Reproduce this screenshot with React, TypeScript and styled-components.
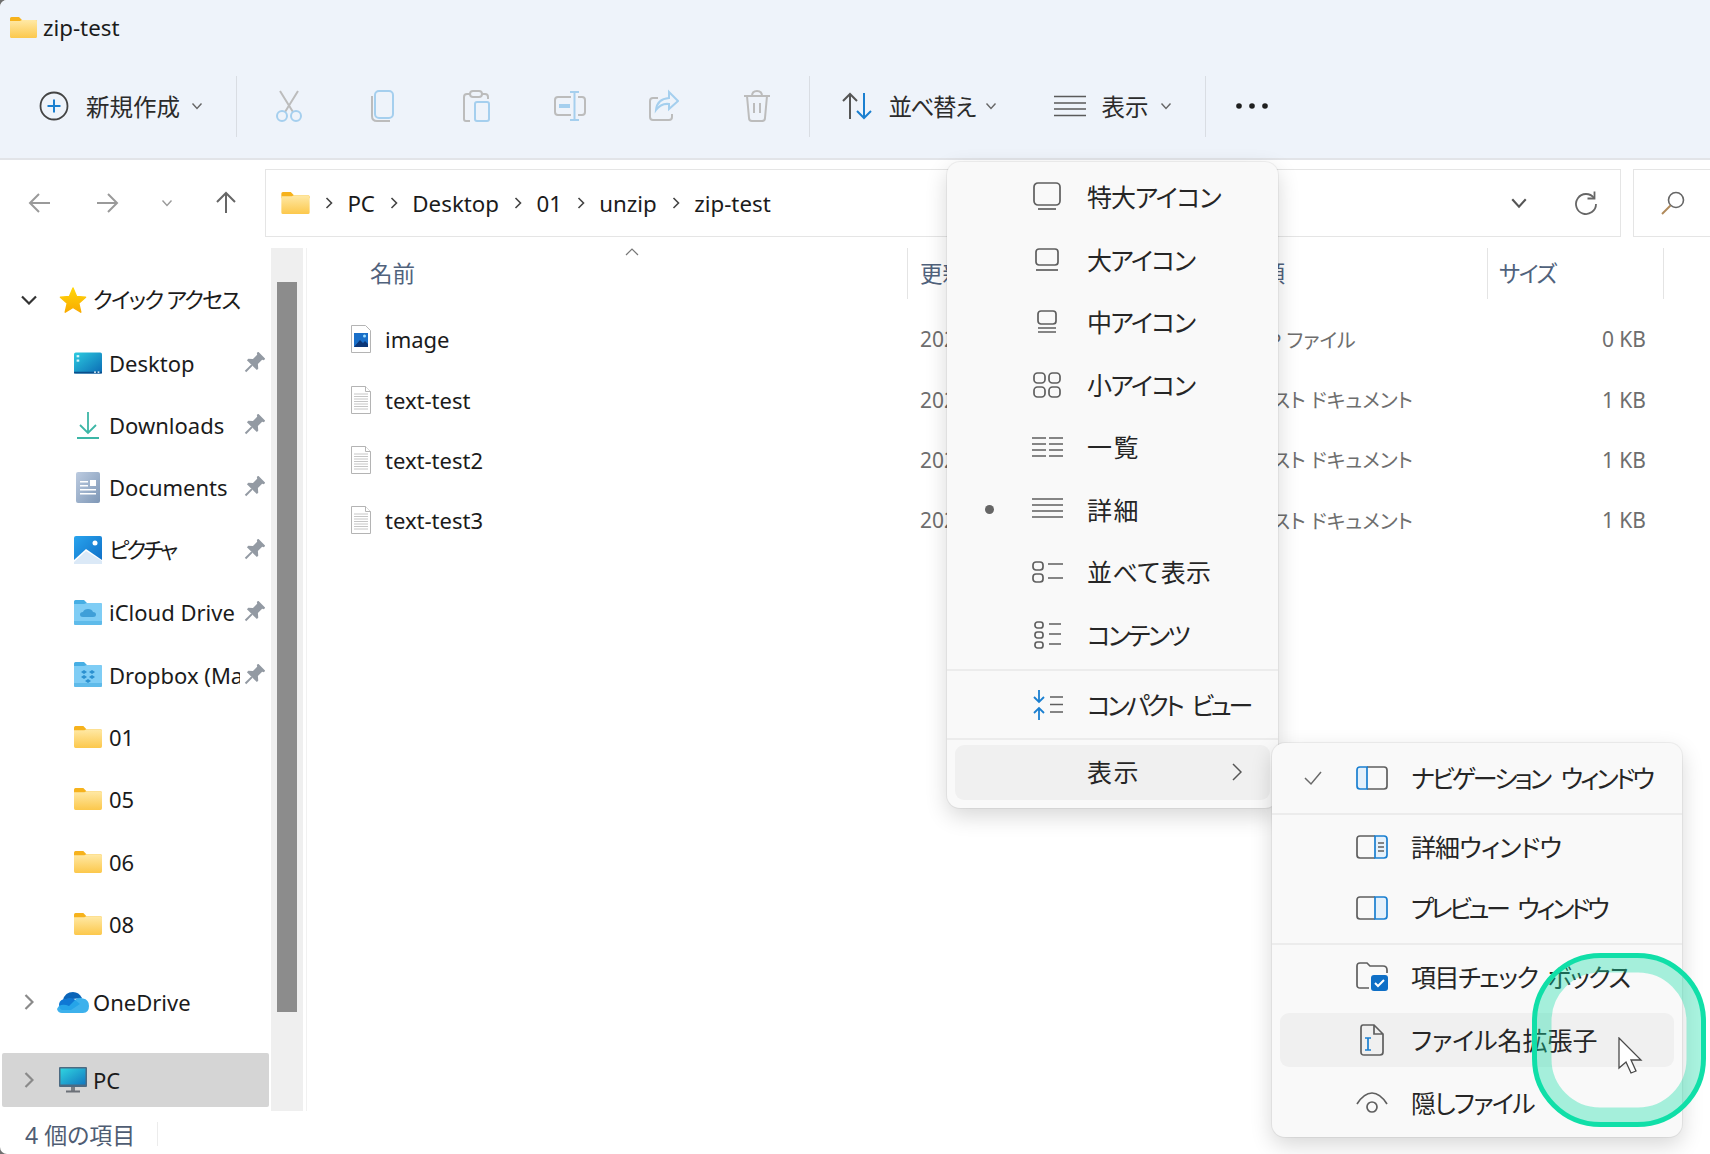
import styled, { createGlobalStyle } from 'styled-components';

const GlobalStyle = createGlobalStyle`
    html, body {
        margin: 0;
        padding: 0;
        width: 100%;
        height: 100%;
        overflow: hidden;
        background: #6f6f6f;
    }
    body {
        font-family: 'Noto Sans', 'Noto Sans CJK JP', sans-serif;
        font-feature-settings: 'palt';
        color: #1b1b1b;
    }
`;

const grayStroke = '#5f5f5f';
const dimGray = '#bcbcbc';
const dimBlue = '#a5cfee';
const blue = '#1a7fd0';

/* ---------- icons ---------- */

const Folder = ({ w = 27, h = 21 }: { w?: number; h?: number }) => (
    <svg width={w} height={h} viewBox="0 0 27 21">
        <defs>
            <linearGradient id="fold" x1="0" y1="0" x2="0" y2="1">
                <stop offset="0" stopColor="#ffe9a6" />
                <stop offset="1" stopColor="#fcc84c" />
            </linearGradient>
        </defs>
        <path d="M0 1.500Q0 0 1.500 0H9l3 3h13.500Q27 3 27 4.500V6H0z" fill="#f6b21c" />
        <path d="M0 4h10l2-1h13.500Q27 3 27 4.500v15q0 1.500-1.500 1.500h-24Q0 21 0 19.500z" fill="url(#fold)" />
    </svg>
);

const Plus = () => (
    <svg width="30" height="30" viewBox="0 0 30 30" fill="none">
        <circle cx="15" cy="15" r="13.500" stroke="#444" strokeWidth="1.800" />
        <path d="M15 8.500v13M8.500 15h13" stroke={blue} strokeWidth="2" />
    </svg>
);

const Chevron = ({ size = 12, color = '#666' }: { size?: number; color?: string }) => (
    <svg width={size} height={size * 0.67} viewBox="0 0 12 8" fill="none">
        <path d="M1.500 1.500 6 6.500l4.500-5" stroke={color} strokeWidth="1.400" />
    </svg>
);

const Scissors = () => (
    <svg width="32" height="34" viewBox="0 0 32 34" fill="none" strokeWidth="2">
        <path d="M7 2l13 21M25 2L12 23" stroke={dimGray} />
        <circle cx="9" cy="27" r="5" stroke={dimBlue} />
        <circle cx="23" cy="27" r="5" stroke={dimBlue} />
    </svg>
);

const Copy = () => (
    <svg width="32" height="34" viewBox="0 0 32 34" fill="none" strokeWidth="2">
        <path d="M6 7v20q0 5 5 5h13" stroke={dimGray} />
        <rect x="9" y="2" width="18" height="27" rx="4" stroke={dimBlue} />
    </svg>
);

const Paste = () => (
    <svg width="32" height="34" viewBox="0 0 32 34" fill="none" strokeWidth="2">
        <path d="M10 32H6q-2 0-2-2V8q0-3 3-3h4M21 5h4q3 0 3 3v2" stroke={dimGray} />
        <rect x="10" y="2" width="12" height="6" rx="3" stroke={dimGray} />
        <rect x="15" y="13" width="14" height="19" rx="2" stroke={dimBlue} />
    </svg>
);

const Rename = () => (
    <svg width="34" height="34" viewBox="0 0 34 34" fill="none" strokeWidth="2">
        <path d="M18 8H5q-3 0-3 3v12q0 3 3 3h13M25 8h4q3 0 3 3v12q0 3-3 3h-4" stroke={dimGray} />
        <path d="M21.500 3v28M17 3h9M17 31h9" stroke={dimBlue} />
        <path d="M6 17h11" stroke={dimBlue} strokeWidth="4" />
    </svg>
);

const Share = () => (
    <svg width="32" height="34" viewBox="0 0 32 34" fill="none" strokeWidth="2">
        <path d="M11 9H6q-3 0-3 3v16q0 3 3 3h16q3 0 3-3v-3" stroke={dimGray} />
        <path d="M22 3l9 9-9 8v-5q-8-1-13 6 1-11 13-12z" stroke={dimBlue} />
    </svg>
);

const Trash = () => (
    <svg width="30" height="34" viewBox="0 0 30 34" fill="none" strokeWidth="2" stroke={dimGray}>
        <path d="M2 7h26M10 7q0-5 5-5t5 5M5 7l2 22q0 3 3 3h10q3 0 3-3l2-22M12 14v10M18 14v10" />
    </svg>
);

const SortIcon = () => (
    <svg width="32" height="30" viewBox="0 0 32 30" fill="none" strokeWidth="2">
        <path d="M9 28V3M2 10l7-7 7 7" stroke="#555" />
        <path d="M23 2v25M16 20l7 7 7-7" stroke={blue} />
    </svg>
);

const LinesIcon = () => (
    <svg width="32" height="22" viewBox="0 0 32 22" fill="none" stroke="#5a5a5a" strokeWidth="1.600">
        <path d="M0 1.500h32M0 8h32M0 14h32M0 20.500h32" />
    </svg>
);

const Dots = () => (
    <svg width="34" height="8" viewBox="0 0 34 8" fill="#1f1f1f">
        <circle cx="4" cy="4" r="2.800" />
        <circle cx="17" cy="4" r="2.800" />
        <circle cx="30" cy="4" r="2.800" />
    </svg>
);

const Arrow = ({ dir, color }: { dir: 'left' | 'right' | 'up'; color: string }) => {
    const rotate = dir === 'left' ? 0 : dir === 'right' ? 180 : 90;
    return (
        <svg width="24" height="24" viewBox="0 0 24 24" fill="none" style={{ transform: `rotate(${rotate}deg)` }}>
            <path d="M22 12H2M11 3l-9 9 9 9" stroke={color} strokeWidth="2" />
        </svg>
    );
};

const Crumbmark = () => (
    <svg width="8" height="14" viewBox="0 0 8 14" fill="none">
        <path d="M1.500 2 6.500 7l-5 5" stroke="#444" strokeWidth="1.600" />
    </svg>
);

const Refresh = () => (
    <svg width="24" height="26" viewBox="0 0 24 26" fill="none" stroke="#666" strokeWidth="1.800">
        <path d="M20 8A10 10 0 1 0 22 14" />
        <path d="M20.500 1.500V8.500H13.500" />
    </svg>
);

const Search = () => (
    <svg width="26" height="26" viewBox="0 0 26 26" fill="none">
        <circle cx="16" cy="10" r="7.500" stroke="#666" strokeWidth="1.600" />
        <path d="M10.500 15.500 2 24" stroke="#b08a5a" strokeWidth="2" />
    </svg>
);

const Star = () => (
    <svg width="28" height="28" viewBox="0 0 28 28">
        <defs>
            <linearGradient id="star" x1="0" y1="0" x2="0" y2="1">
                <stop offset="0" stopColor="#ffd60a" />
                <stop offset="1" stopColor="#f9ab00" />
            </linearGradient>
        </defs>
        <path
            d="M14 2l3.600 8.500 9 .8-6.800 6 2 8.900L14 21.500l-7.800 4.700 2-8.900-6.800-6 9-.8z"
            fill="url(#star)"
            stroke="url(#star)"
            strokeWidth="1.400"
            strokeLinejoin="round"
        />
    </svg>
);

const DesktopIcon = () => (
    <svg width="32" height="24" viewBox="0 0 32 24">
        <defs>
            <linearGradient id="desk" x1="0" y1="0" x2="1" y2="1">
                <stop offset="0" stopColor="#2ccbe0" />
                <stop offset="1" stopColor="#0b6ab4" />
            </linearGradient>
        </defs>
        <rect width="32" height="24" rx="2" fill="url(#desk)" />
        <rect y="22" width="32" height="2" fill="#0a4f8c" />
        <rect x="3" y="3" width="3" height="2.500" fill="#d6f6fb" />
        <rect x="3" y="8" width="3" height="2.500" fill="#d6f6fb" />
        <rect x="23" y="21.500" width="2" height="2" fill="#cfe6f5" />
        <rect x="27" y="21.500" width="2" height="2" fill="#cfe6f5" />
    </svg>
);

const DownloadIcon = () => (
    <svg width="24" height="28" viewBox="0 0 24 28" fill="none" stroke="#3cb6a6" strokeWidth="1.800">
        <path d="M12 1v21M4 14l8 8 8-8" />
        <path d="M1 27h22" strokeWidth="2" />
    </svg>
);

const DocumentsIcon = () => (
    <svg width="24" height="31" viewBox="0 0 24 31">
        <defs>
            <linearGradient id="docs" x1="0" y1="0" x2="1" y2="1">
                <stop offset="0" stopColor="#bccbe0" />
                <stop offset="1" stopColor="#7e97b6" />
            </linearGradient>
        </defs>
        <rect width="24" height="31" rx="2" fill="url(#docs)" />
        <path d="M4 9h8v1.500H4zM4 13h8v1.500H4zM4 17h16v1.500H4zM4 21h16v1.500H4z" fill="#fff" />
        <rect x="14" y="8" width="6" height="6" fill="#fff" />
    </svg>
);

const PictureIcon = () => (
    <svg width="28" height="28" viewBox="0 0 28 28">
        <defs>
            <linearGradient id="pic" x1="0" y1="0" x2="1" y2="1">
                <stop offset="0" stopColor="#28a4ee" />
                <stop offset="1" stopColor="#0f6cc4" />
            </linearGradient>
        </defs>
        <rect width="28" height="28" rx="2" fill="url(#pic)" />
        <path d="M0 24 12 13l16 11v4H0z" fill="#fff" />
        <path d="M0 26 12 15l16 10v3H0z" fill="#dbe9f7" />
        <circle cx="21" cy="7" r="2.500" fill="#fff" />
    </svg>
);

const BlueFolder = ({ mark }: { mark: 'cloud' | 'dropbox' }) => (
    <svg width="28" height="25" viewBox="0 0 28 25">
        <path d="M0 1.500Q0 0 1.500 0H10l3 3h13.500Q28 3 28 4.500V6H0z" fill="#46aee4" />
        <path d="M0 4h10l3-1h13.500Q28 3 28 4.500v19q0 1.500-1.500 1.500h-25Q0 25 0 23.500z" fill="#7fcdf5" />
        <path d="M0 21h28v2.500q0 1.500-1.500 1.500h-25Q0 25 0 23.500z" fill="#5fbbea" />
        {mark === 'cloud' ? (
            <path d="M9 17q-3 0-3-2.500T9 12q1-3 5-3t5 3q3 0 3 2.500T19 17z" fill="#3f9fd8" />
        ) : (
            <path d="M10 8l3 2-3 2-3-2zM18 8l3 2-3 2-3-2zM10 13l3 2-3 2-3-2zM18 13l3 2-3 2-3-2zM14 17l3 2-3 2-3-2z" fill="#2b90cf" />
        )}
    </svg>
);

const Pin = () => (
    <svg width="22" height="22" viewBox="0 0 22 22" fill="#939aa3">
        <g transform="rotate(45 11 11)">
            <path d="M6 0h10v2l-1.500 1v6l3.500 3v2H4v-2l3.500-3V3L6 2z" />
            <rect x="10" y="14" width="2" height="9" />
        </g>
    </svg>
);

const NavChevron = ({ open }: { open?: boolean }) =>
    open ? (
        <svg width="16" height="10" viewBox="0 0 16 10" fill="none">
            <path d="M1 1.500l7 7 7-7" stroke="#333" strokeWidth="2.200" />
        </svg>
    ) : (
        <svg width="10" height="16" viewBox="0 0 10 16" fill="none">
            <path d="M1.500 1l7 7-7 7" stroke="#8a8a8a" strokeWidth="2.200" />
        </svg>
    );

const OneDriveIcon = () => (
    <svg width="32" height="21" viewBox="0 0 32 21">
        <path d="M6 8q2-8 10-8 6 0 9 6z" fill="#0a64b8" />
        <path d="M2 12q1-5 7-5 3-2 8 0l6 5-9 6H5q-3-1-3-6z" fill="#0f78d4" />
        <path d="M12 14l7-7q3-2 7-.5 6 1 6 7.500 0 7-6 7H5q-4 0-5-4 1-3 4-4 4-1 8 1z" fill="#28a8ea" opacity="0.900" />
    </svg>
);

const MonitorIcon = () => (
    <svg width="28" height="26" viewBox="0 0 28 26">
        <defs>
            <linearGradient id="mon" x1="0" y1="0" x2="1" y2="1">
                <stop offset="0" stopColor="#2fd4e0" />
                <stop offset="1" stopColor="#1278c0" />
            </linearGradient>
        </defs>
        <rect width="28" height="20" rx="1" fill="#4c6a82" />
        <rect x="1.500" y="1.500" width="25" height="16" fill="url(#mon)" />
        <rect x="12" y="20" width="4" height="4" fill="#7a7f85" />
        <rect x="7" y="23.500" width="14" height="2" fill="#6c7178" />
    </svg>
);

const DocFile = () => (
    <svg width="20" height="28" viewBox="0 0 20 28" fill="#fff" stroke="#b4b4b4">
        <path d="M.5.500h14l5 5v22H.5z" />
        <path d="M14.500.500v5h5" />
        <path d="M3 8h14M3 10.500h14M3 13h14M3 15.500h14M3 18h14M3 20.500h14M3 23h14" stroke="#c6c6c6" />
    </svg>
);

const ImageFile = () => (
    <svg width="20" height="28" viewBox="0 0 20 28">
        <path d="M.5.500h14l5 5v22H.5z" fill="#fff" stroke="#b4b4b4" />
        <rect x="3" y="8" width="14" height="14" fill="#1a6fc8" />
        <path d="M3 22l6-7 3 3 2-2 3 3v3z" fill="#0c3778" />
        <circle cx="13.500" cy="11" r="1.500" fill="#9fe0ff" />
    </svg>
);

/* view menu icons, all on a 32 box */
const ViewIcon = ({ kind }: { kind: string }) => {
    const s = { stroke: grayStroke, strokeWidth: 1.700, fill: 'none' };
    switch (kind) {
        case 'xl':
            return (
                <svg width="32" height="32" viewBox="0 0 32 32" {...s}>
                    <rect x="3" y="2" width="26" height="22" rx="4" />
                    <path d="M7 28h18" />
                </svg>
            );
        case 'l':
            return (
                <svg width="32" height="32" viewBox="0 0 32 32" {...s}>
                    <rect x="5" y="5" width="22" height="16" rx="3" />
                    <path d="M5 26h22" />
                </svg>
            );
        case 'm':
            return (
                <svg width="32" height="32" viewBox="0 0 32 32" {...s}>
                    <rect x="7" y="5" width="18" height="13" rx="3" />
                    <path d="M7 22h18M7 26h18" />
                </svg>
            );
        case 's':
            return (
                <svg width="32" height="32" viewBox="0 0 32 32" {...s}>
                    <rect x="3" y="4" width="11" height="10" rx="3.500" />
                    <rect x="18" y="4" width="11" height="10" rx="3.500" />
                    <rect x="3" y="18" width="11" height="10" rx="3.500" />
                    <rect x="18" y="18" width="11" height="10" rx="3.500" />
                </svg>
            );
        case 'list':
            return (
                <svg width="32" height="32" viewBox="0 0 32 32" {...s}>
                    <path d="M1 7h14M1 13h14M1 19h14M1 25h14M18 7h14M18 13h14M18 19h14M18 25h14" />
                </svg>
            );
        case 'details':
            return (
                <svg width="32" height="32" viewBox="0 0 32 32" {...s}>
                    <path d="M1 5h31M1 11h31M1 17h31M1 23h31" />
                </svg>
            );
        case 'tiles':
            return (
                <svg width="32" height="32" viewBox="0 0 32 32" {...s}>
                    <rect x="2" y="6" width="10" height="8" rx="3" />
                    <rect x="2" y="18" width="10" height="8" rx="3" />
                    <path d="M17 8h15M17 22h15" />
                </svg>
            );
        case 'content':
            return (
                <svg width="32" height="32" viewBox="0 0 32 32" {...s}>
                    <rect x="4" y="3" width="8" height="6" rx="2.500" />
                    <rect x="4" y="13" width="8" height="6" rx="2.500" />
                    <rect x="4" y="23" width="8" height="6" rx="2.500" />
                    <path d="M18 5h12M18 15h12M18 25h12" />
                </svg>
            );
        default:
            return (
                <svg width="32" height="32" viewBox="0 0 32 32" fill="none">
                    <path d="M8 1v12M3 8l5 5 5-5M8 31V19M3 24l5-5 5 5" stroke={blue} strokeWidth="1.800" />
                    <path d="M19 8h13M19 15.500h13M19 23h13" stroke={grayStroke} strokeWidth="1.700" />
                </svg>
            );
    }
};

const PaneIcon = ({ kind }: { kind: string }) => {
    const g = { stroke: grayStroke, strokeWidth: 1.700, fill: 'none' };
    const b = { stroke: blue, strokeWidth: 1.700, fill: 'none' };
    switch (kind) {
        case 'nav':
            return (
                <svg width="32" height="26" viewBox="0 0 32 26">
                    <path d="M11 2h17q3 0 3 3v16q0 3-3 3H11" {...g} />
                    <path d="M11 2H4Q1 2 1 5v16q0 3 3 3h7z" fill="#e5f1fb" stroke={blue} strokeWidth="1.700" />
                </svg>
            );
        case 'detail':
            return (
                <svg width="32" height="26" viewBox="0 0 32 26">
                    <path d="M19 2H4Q1 2 1 5v16q0 3 3 3h15" {...g} />
                    <path d="M19 2h9q3 0 3 3v16q0 3-3 3h-9z" fill="#e5f1fb" stroke={blue} strokeWidth="1.700" />
                    <path d="M22 9h6M22 13h6M22 17h6" {...g} strokeWidth={1.300} />
                </svg>
            );
        case 'preview':
            return (
                <svg width="32" height="26" viewBox="0 0 32 26">
                    <path d="M19 2H4Q1 2 1 5v16q0 3 3 3h15" {...g} />
                    <path d="M19 2h9q3 0 3 3v16q0 3-3 3h-9z" fill="#e5f1fb" stroke={blue} strokeWidth="1.700" />
                </svg>
            );
        case 'check':
            return (
                <svg width="32" height="30" viewBox="0 0 32 30">
                    <path d="M13 26H4q-3 0-3-3V4q0-3 3-3h7l3 3h13q4 0 4 4v3" {...g} />
                    <rect x="15" y="13" width="17" height="16" rx="3" fill="#0f6fc6" />
                    <path d="M19 21l3 3 6-6" stroke="#fff" strokeWidth="2" fill="none" />
                </svg>
            );
        case 'ext':
            return (
                <svg width="24" height="32" viewBox="0 0 24 32">
                    <path d="M3 1h11l9 9v18q0 3-3 3H4q-3 0-3-3V4q0-3 2-3zM14 1v9h9" {...g} />
                    <path d="M8 14v12M5 14h6M5 26h6" {...b} />
                </svg>
            );
        default:
            return (
                <svg width="32" height="24" viewBox="0 0 32 24" {...g}>
                    <path d="M1 13Q8 2 16 2t15 11" />
                    <circle cx="16" cy="16" r="5" />
                </svg>
            );
    }
};

const Check = () => (
    <svg width="20" height="16" viewBox="0 0 20 16" fill="none">
        <path d="M2 8l6 6L18 2" stroke="#6a6a6a" strokeWidth="1.500" />
    </svg>
);

const SmallChevron = () => (
    <svg width="10" height="18" viewBox="0 0 10 18" fill="none">
        <path d="M1 1l8 8-8 8" stroke="#555" strokeWidth="1.500" />
    </svg>
);

/* ---------- layout ---------- */

const Window = styled.div`
    position: relative;
    width: 1710px;
    height: 1154px;
    background: #fff;
    border-radius: 7px 0 0 7px;
    overflow: hidden;
    display: flex;
    flex-direction: column;
`;

const Header = styled.header`
    height: 160px;
    box-sizing: border-box;
    background: #eef3fa;
    border-bottom: 2px solid #e2e4e8;
    flex: none;
`;

const TitleBar = styled.div`
    height: 54px;
    display: flex;
    align-items: center;
    padding-left: 10px;
    gap: 6px;
    font-size: 22.300px;
`;

const Toolbar = styled.div`
    height: 104px;
    display: flex;
    align-items: center;
    padding-left: 39px;
`;

const ToolGroup = styled.div<{ $ml?: number }>`
    display: flex;
    align-items: center;
    margin-left: ${(p) => p.$ml ?? 0}px;
`;

const ToolLabel = styled.span<{ $w: number; $ls?: number; $ml?: number }>`
    width: ${(p) => p.$w}px;
    margin: 0 12px 0 ${(p) => p.$ml ?? 17}px;
    font-size: 23.500px;
    letter-spacing: ${(p) => p.$ls ?? 0}px;
    color: #2b2b2b;
    white-space: nowrap;
`;

const ToolDivider = styled.div<{ $ml: number }>`
    width: 1px;
    height: 61px;
    margin-left: ${(p) => p.$ml}px;
    background: #d9dde3;
`;

const ActionIcon = styled.div`
    width: 93.600px;
    display: flex;
    justify-content: center;
    align-items: center;
`;

const AddressRow = styled.div`
    height: 88px;
    flex: none;
    display: flex;
    align-items: flex-start;
    padding: 9px 0 0 20px;
    box-sizing: border-box;
`;

const NavButton = styled.div<{ $ml?: number }>`
    width: 40px;
    height: 68px;
    flex: none;
    margin-left: ${(p) => p.$ml ?? 0}px;
    display: flex;
    align-items: center;
    justify-content: center;
`;

const AddressBox = styled.div`
    width: 1356px;
    height: 68px;
    flex: none;
    margin-left: 19px;
    box-sizing: border-box;
    border: 1.500px solid #e5e5e5;
    display: flex;
    align-items: center;
    padding-left: 15px;
`;

const Crumbs = styled.div`
    display: flex;
    align-items: center;
    gap: 14.700px;
    font-size: 22.300px;
    white-space: nowrap;
`;

const AddressTools = styled.div`
    margin-left: auto;
    display: flex;
    align-items: center;
    gap: 46px;
    padding-right: 22px;
`;

const SearchBox = styled.div`
    width: 120px;
    height: 68px;
    margin-left: 12px;
    flex: none;
    box-sizing: border-box;
    border: 1.500px solid #e5e5e5;
    display: flex;
    align-items: center;
    padding-left: 26px;
`;

const Main = styled.div`
    height: 863px;
    flex: none;
    display: flex;
`;

const Sidebar = styled.nav`
    width: 271px;
    flex: none;
    padding-top: 21px;
    box-sizing: border-box;
    font-size: 22px;
`;

const NavRow = styled.div<{ $level?: number; $mt?: number; $selected?: boolean }>`
    height: ${(p) => (p.$selected ? 54 : 62.400)}px;
    margin-top: ${(p) => p.$mt ?? 0}px;
    margin-left: ${(p) => (p.$selected ? 2 : 0)}px;
    margin-right: ${(p) => (p.$selected ? 2 : 0)}px;
    padding-left: ${(p) => (p.$level ? 74 : p.$selected ? 0 : 2)}px;
    border-radius: 2px;
    background: ${(p) => (p.$selected ? '#d5d5d5' : 'transparent')};
    display: flex;
    align-items: center;
`;

const NavChevronSlot = styled.div`
    width: 54px;
    flex: none;
    display: flex;
    justify-content: center;
`;

const NavIconSlot = styled.div<{ $level?: number }>`
    width: ${(p) => (p.$level ? 28 : 33)}px;
    flex: none;
    display: flex;
    justify-content: center;
    align-items: center;
`;

const NavLabel = styled.span<{ $level?: number; $ls?: number; $cjk?: boolean }>`
    flex: 1;
    min-width: 0;
    margin-left: ${(p) => (p.$level ? 7 : 4)}px;
    margin-bottom: ${(p) => (p.$cjk ? 4 : 0)}px;
    letter-spacing: ${(p) => p.$ls ?? 0}px;
    overflow: hidden;
    white-space: nowrap;
`;

const PinSlot = styled.div`
    width: 22px;
    margin: 0 6px 0 3px;
    flex: none;
    display: flex;
`;

const ScrollTrack = styled.div`
    width: 32px;
    flex: none;
    background: #efefef;
    padding: 34px 6px 99px;
    box-sizing: border-box;
    display: flex;
`;

const ScrollThumb = styled.div`
    flex: 1;
    background: #8c8c8c;
`;

const FilePane = styled.section`
    flex: 1;
    margin-left: 3px;
    border-left: 1px solid #f1f1f1;
`;

const FileHeader = styled.div`
    position: relative;
    display: grid;
    grid-template-columns: 601px 316px 264px 176px;
    height: 51px;
    font-size: 22.500px;
    color: #50627c;
`;

const HeadCell = styled.div<{ $pl: number; $line?: boolean; $ls?: number }>`
    display: flex;
    align-items: center;
    padding: 0 0 3px ${(p) => p.$pl}px;
    letter-spacing: ${(p) => p.$ls ?? 0}px;
    border-right: ${(p) => (p.$line ? '1px solid #e4e4e4' : 'none')};
    white-space: nowrap;
`;

const SortCaret = styled.svg`
    position: absolute;
    left: 318px;
    top: 0;
`;

const FileRows = styled.div`
    margin-top: 10px;
`;

const FileRow = styled.div`
    display: grid;
    grid-template-columns: 601px 316px 264px 176px;
    height: 60.400px;
    align-items: center;
    font-size: 21px;
    color: #6e6e6e;
    white-space: nowrap;
`;

const NameCell = styled.div`
    display: flex;
    align-items: center;
    gap: 14px;
    padding-left: 44px;
    font-size: 22px;
    color: #1b1b1b;
`;

const GrayCell = styled.div<{ $pl?: number; $small?: boolean }>`
    padding-left: ${(p) => p.$pl ?? 12}px;
    font-size: ${(p) => (p.$small ? 20 : 21)}px;
`;

const SizeCell = styled.div`
    text-align: right;
    padding-right: 18px;
    font-size: 21px;
`;

const StatusBar = styled.footer`
    flex: 1;
    display: flex;
    align-items: center;
    padding: 2px 0 0 25px;
    font-size: 23px;
    color: #4f5d73;
`;

const StatusLine = styled.div`
    width: 1px;
    height: 24px;
    margin-left: 22px;
    background: #ececec;
`;

const Menu = styled.div<{ $top: number; $left: number; $w: number; $h: number; $z: number }>`
    position: absolute;
    top: ${(p) => p.$top}px;
    left: ${(p) => p.$left}px;
    width: ${(p) => p.$w}px;
    height: ${(p) => p.$h}px;
    z-index: ${(p) => p.$z};
    box-sizing: border-box;
    padding-top: 4px;
    background: #f9f9f9;
    border-radius: 13px;
    box-shadow: 0 0 0 1px rgba(0, 0, 0, 0.05), 0 8px 22px rgba(0, 0, 0, 0.16);
    font-size: 25px;
    color: #262626;
`;

const MenuRow = styled.div<{ $col: number; $slot: number; $h?: number; $active?: boolean }>`
    display: grid;
    grid-template-columns: ${(p) => p.$col - (p.$active ? 8 : 0)}px ${(p) => p.$slot}px 1fr auto;
    align-items: center;
    height: ${(p) => p.$h ?? 62.500}px;
    margin: ${(p) => (p.$active ? '5px 8px' : '0')};
    border-radius: 9px;
    background: ${(p) => (p.$active ? '#f0f0f0' : 'transparent')};
    white-space: nowrap;
`;

const MenuLabel = styled.span<{ $gap: number; $ls?: number; $ws?: number }>`
    padding: 0 0 2px ${(p) => p.$gap}px;
    letter-spacing: ${(p) => p.$ls ?? 0}px;
    word-spacing: ${(p) => p.$ws ?? 0}px;
`;

const MenuMark = styled.div`
    display: flex;
    justify-content: center;
`;

const MenuIcon = styled.div`
    display: flex;
    justify-content: center;
    align-items: center;
`;

const Bullet = styled.div`
    width: 9px;
    height: 9px;
    border-radius: 50%;
    background: #666;
`;

const MenuLine = styled.div<{ $mt: number; $mb: number }>`
    height: 2px;
    margin: ${(p) => p.$mt}px 0 ${(p) => p.$mb}px;
    background: #ececec;
`;

const MenuArrow = styled.div`
    padding-right: 28px;
    display: flex;
`;

const Ring = styled.svg`
    position: absolute;
    left: 1531px;
    top: 952px;
    z-index: 4;
    pointer-events: none;
`;

const Cursor = styled.svg`
    position: absolute;
    left: 1618px;
    top: 1037px;
    z-index: 3;
`;

/* ---------- data ---------- */

const quick = [
    { name: 'Desktop', icon: <DesktopIcon /> },
    { name: 'Downloads', icon: <DownloadIcon /> },
    { name: 'Documents', icon: <DocumentsIcon /> },
    { name: 'ピクチャ', icon: <PictureIcon />, ls: -3, cjk: true },
    { name: 'iCloud Drive', icon: <BlueFolder mark="cloud" /> },
    { name: 'Dropbox (Mac)', icon: <BlueFolder mark="dropbox" /> },
];

const files = [
    { name: 'image', icon: <ImageFile />, type: 'ZIP ファイル', size: '0 KB', pl: 27 },
    { name: 'text-test', icon: <DocFile />, type: 'テキスト ドキュメント', size: '1 KB' },
    { name: 'text-test2', icon: <DocFile />, type: 'テキスト ドキュメント', size: '1 KB' },
    { name: 'text-test3', icon: <DocFile />, type: 'テキスト ドキュメント', size: '1 KB' },
];

const views = [
    { kind: 'xl', label: '特大アイコン', ls: -1.100 },
    { kind: 'l', label: '大アイコン', ls: -1.500 },
    { kind: 'm', label: '中アイコン', ls: -1.500 },
    { kind: 's', label: '小アイコン', ls: -1.500 },
    { kind: 'list', label: '一覧', ls: 1.600 },
    { kind: 'details', label: '詳細', ls: 1.600, current: true },
    { kind: 'tiles', label: '並べて表示', ls: 0.400 },
    { kind: 'content', label: 'コンテンツ', ls: -2.600 },
];

const App = () => {
    return (
        <Window>
            <GlobalStyle />
            <Header>
                <TitleBar>
                    <Folder />
                    zip-test
                </TitleBar>
                <Toolbar>
                    <ToolGroup>
                        <Plus />
                        <ToolLabel $w={93}>新規作成</ToolLabel>
                        <Chevron />
                    </ToolGroup>
                    <ToolDivider $ml={33} />
                    <ToolGroup $ml={5}>
                        <ActionIcon><Scissors /></ActionIcon>
                        <ActionIcon><Copy /></ActionIcon>
                        <ActionIcon><Paste /></ActionIcon>
                        <ActionIcon><Rename /></ActionIcon>
                        <ActionIcon><Share /></ActionIcon>
                        <ActionIcon><Trash /></ActionIcon>
                    </ToolGroup>
                    <ToolDivider $ml={5} />
                    <ToolGroup $ml={31}>
                        <SortIcon />
                        <ToolLabel $w={84} $ml={16} $ls={-1.500}>並べ替え</ToolLabel>
                        <Chevron />
                    </ToolGroup>
                    <ToolGroup $ml={57}>
                        <LinesIcon />
                        <ToolLabel $w={46} $ml={16}>表示</ToolLabel>
                        <Chevron />
                    </ToolGroup>
                    <ToolDivider $ml={33} />
                    <ToolGroup $ml={29}>
                        <Dots />
                    </ToolGroup>
                </Toolbar>
            </Header>

            <AddressRow>
                <NavButton><Arrow dir="left" color="#9a9a9a" /></NavButton>
                <NavButton $ml={27}><Arrow dir="right" color="#9a9a9a" /></NavButton>
                <NavButton $ml={20}><Chevron color="#9a9a9a" /></NavButton>
                <NavButton $ml={19}><Arrow dir="up" color="#666" /></NavButton>
                <AddressBox>
                    <Crumbs>
                        <Folder w={29} h={22} />
                        <Crumbmark />
                        PC
                        <Crumbmark />
                        Desktop
                        <Crumbmark />
                        01
                        <Crumbmark />
                        unzip
                        <Crumbmark />
                        zip-test
                    </Crumbs>
                    <AddressTools>
                        <Chevron size={18} color="#555" />
                        <Refresh />
                    </AddressTools>
                </AddressBox>
                <SearchBox><Search /></SearchBox>
            </AddressRow>

            <Main>
                <Sidebar>
                    <NavRow>
                        <NavChevronSlot><NavChevron open /></NavChevronSlot>
                        <NavIconSlot><Star /></NavIconSlot>
                        <NavLabel $ls={-1.700} $cjk>クイック アクセス</NavLabel>
                    </NavRow>
                    {quick.map((item) => (
                        <NavRow key={item.name} $level={1}>
                            <NavIconSlot $level={1}>{item.icon}</NavIconSlot>
                            <NavLabel $level={1} $ls={item.ls} $cjk={item.cjk}>{item.name}</NavLabel>
                            <PinSlot><Pin /></PinSlot>
                        </NavRow>
                    ))}
                    {['01', '05', '06', '08'].map((name) => (
                        <NavRow key={name} $level={1}>
                            <NavIconSlot $level={1}><Folder w={28} h={22} /></NavIconSlot>
                            <NavLabel $level={1}>{name}</NavLabel>
                        </NavRow>
                    ))}
                    <NavRow $mt={16}>
                        <NavChevronSlot><NavChevron /></NavChevronSlot>
                        <NavIconSlot><OneDriveIcon /></NavIconSlot>
                        <NavLabel>OneDrive</NavLabel>
                    </NavRow>
                    <NavRow $mt={19} $selected>
                        <NavChevronSlot><NavChevron /></NavChevronSlot>
                        <NavIconSlot><MonitorIcon /></NavIconSlot>
                        <NavLabel>PC</NavLabel>
                    </NavRow>
                </Sidebar>
                <ScrollTrack><ScrollThumb /></ScrollTrack>
                <FilePane>
                    <FileHeader>
                        <HeadCell $pl={63} $line>名前</HeadCell>
                        <HeadCell $pl={12}>更新日時</HeadCell>
                        <HeadCell $pl={16} $line>種類</HeadCell>
                        <HeadCell $pl={11} $ls={-1.500} $line>サイズ</HeadCell>
                        <SortCaret width="14" height="8" viewBox="0 0 14 8" fill="none">
                            <path d="M1 7l6-6 6 6" stroke="#777" strokeWidth="1.200" />
                        </SortCaret>
                    </FileHeader>
                    <FileRows>
                        {files.map((file) => (
                            <FileRow key={file.name}>
                                <NameCell>
                                    {file.icon}
                                    {file.name}
                                </NameCell>
                                <GrayCell>2022/03/14 10:21</GrayCell>
                                <GrayCell $pl={file.pl} $small>{file.type}</GrayCell>
                                <SizeCell>{file.size}</SizeCell>
                            </FileRow>
                        ))}
                    </FileRows>
                </FilePane>
            </Main>

            <StatusBar>
                4 個の項目
                <StatusLine />
            </StatusBar>

            <Menu $top={162} $left={947} $w={331} $h={646} $z={1}>
                {views.map((v) => (
                    <MenuRow key={v.kind} $col={84} $slot={32}>
                        <MenuMark>{v.current && <Bullet />}</MenuMark>
                        <MenuIcon><ViewIcon kind={v.kind} /></MenuIcon>
                        <MenuLabel $gap={24} $ls={v.ls}>{v.label}</MenuLabel>
                    </MenuRow>
                ))}
                <MenuLine $mt={3} $mb={3} />
                <MenuRow $col={84} $slot={32}>
                    <MenuMark />
                    <MenuIcon><ViewIcon kind="compact" /></MenuIcon>
                    <MenuLabel $gap={24} $ls={-3.400} $ws={7}>コンパクト ビュー</MenuLabel>
                </MenuRow>
                <MenuLine $mt={1} $mb={1} />
                <MenuRow $col={84} $slot={32} $h={55} $active>
                    <MenuMark />
                    <MenuIcon />
                    <MenuLabel $gap={24} $ls={1.600}>表示</MenuLabel>
                    <MenuArrow><SmallChevron /></MenuArrow>
                </MenuRow>
            </Menu>

            <Menu $top={743} $left={1272} $w={410} $h={394} $z={2}>
                <MenuRow $col={82} $slot={36}>
                    <MenuMark><Check /></MenuMark>
                    <MenuIcon><PaneIcon kind="nav" /></MenuIcon>
                    <MenuLabel $gap={21} $ls={-3} $ws={8}>ナビゲーション ウィンドウ</MenuLabel>
                </MenuRow>
                <MenuLine $mt={3} $mb={2} />
                <MenuRow $col={82} $slot={36} $h={61}>
                    <MenuMark />
                    <MenuIcon><PaneIcon kind="detail" /></MenuIcon>
                    <MenuLabel $gap={21} $ls={-0.900}>詳細ウィンドウ</MenuLabel>
                </MenuRow>
                <MenuRow $col={82} $slot={36} $h={61}>
                    <MenuMark />
                    <MenuIcon><PaneIcon kind="preview" /></MenuIcon>
                    <MenuLabel $gap={21} $ls={-3.500} $ws={7}>プレビュー ウィンドウ</MenuLabel>
                </MenuRow>
                <MenuLine $mt={4} $mb={1} />
                <MenuRow $col={82} $slot={36} $h={62}>
                    <MenuMark />
                    <MenuIcon><PaneIcon kind="check" /></MenuIcon>
                    <MenuLabel $gap={21} $ls={-1.500} $ws={5}>項目チェック ボックス</MenuLabel>
                </MenuRow>
                <MenuRow $col={82} $slot={36} $h={54} $active>
                    <MenuMark />
                    <MenuIcon><PaneIcon kind="ext" /></MenuIcon>
                    <MenuLabel $gap={21}>ファイル名拡張子</MenuLabel>
                </MenuRow>
                <MenuRow $col={82} $slot={36} $h={62}>
                    <MenuMark />
                    <MenuIcon><PaneIcon kind="eye" /></MenuIcon>
                    <MenuLabel $gap={21} $ls={-1.600}>隠しファイル</MenuLabel>
                </MenuRow>
            </Menu>

            <Cursor width="26" height="38" viewBox="0 0 26 38">
                <path d="M1 1v30l7-6 5 11 5-2-5-11h10z" fill="#fff" stroke="#4a4a4a" strokeWidth="1.300" />
            </Cursor>

            <Ring width="176" height="176" viewBox="0 0 176 176" fill="none">
                <rect x="13" y="13" width="150" height="150" rx="56" stroke="#10dea6" strokeOpacity="0.360" strokeWidth="15" />
                <rect x="3.500" y="3.500" width="169" height="169" rx="66" stroke="#10dfa8" strokeWidth="5" />
            </Ring>
        </Window>
    );
};

export default App;
